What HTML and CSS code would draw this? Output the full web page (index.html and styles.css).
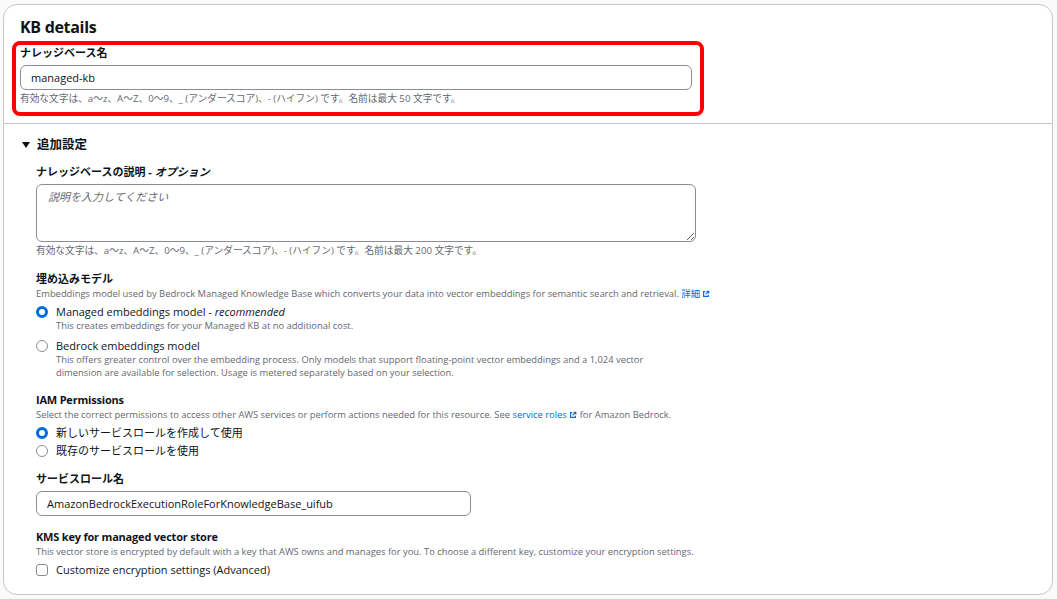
FILE: index.html
```html
<!doctype html>
<html lang="ja">
<head>
    <meta charset="utf-8">
    <meta name="viewport" content="width=device-width, initial-scale=1.0">
    <title>KB details</title>
    <link rel="stylesheet" href="styles.css">
</head>
<body>
    <div class="card">
        <h2 class="card-title">KB details</h2>
        <div class="name-field">
            <label class="field-label" for="kb-name">ナレッジベース名</label>
            <input class="text-input name-input" type="text" id="kb-name" value="managed-kb">
            <p class="hint">有効な文字は、a〜z、A〜Z、0〜9、_ (アンダースコア)、- (ハイフン) です。名前は最大 50 文字です。</p>
        </div>
        <div class="divider"></div>
        <div class="expander">
            <div class="expander-head"><span class="caret"></span>追加設定</div>
            <div class="expander-body">
                <div class="field">
                    <label class="field-label" for="kb-desc">ナレッジベースの説明 - <i>オプション</i></label>
                    <textarea class="text-area" id="kb-desc" placeholder="説明を入力してください"></textarea>
                    <p class="hint">有効な文字は、a〜z、A〜Z、0〜9、_ (アンダースコア)、- (ハイフン) です。名前は最大 200 文字です。</p>
                </div>

                <div class="field gap-lg">
                    <div class="field-label">埋め込みモデル</div>
                    <p class="desc">Embeddings model used by Bedrock Managed Knowledge Base which converts your data into vector embeddings for semantic search and retrieval. <a href="#" class="link">詳細 <svg class="ext" viewBox="0 0 10 10"><path d="M4 2H2v6h6V6" fill="none" stroke="currentColor" stroke-width="1.4"/><path d="M5.5 1.5h3v3M8.5 1.5L4.5 5.5" fill="none" stroke="currentColor" stroke-width="1.4"/></svg></a></p>
                    <div class="option first">
                        <span class="radio checked"></span>
                        <div>
                            <div class="option-label">Managed embeddings model - <i>recommended</i></div>
                            <div class="option-desc">This creates embeddings for your Managed KB at no additional cost.</div>
                        </div>
                    </div>
                    <div class="option spaced">
                        <span class="radio"></span>
                        <div>
                            <div class="option-label">Bedrock embeddings model</div>
                            <div class="option-desc">This offers greater control over the embedding process. Only models that support floating-point vector embeddings and a 1,024 vector<br>dimension are available for selection. Usage is metered separately based on your selection.</div>
                        </div>
                    </div>
                </div>

                <div class="field gap-lg">
                    <div class="field-label latin">IAM Permissions</div>
                    <p class="desc">Select the correct permissions to access other AWS services or perform actions needed for this resource. See <a href="#" class="link">service roles <svg class="ext" viewBox="0 0 10 10"><path d="M4 2H2v6h6V6" fill="none" stroke="currentColor" stroke-width="1.4"/><path d="M5.5 1.5h3v3M8.5 1.5L4.5 5.5" fill="none" stroke="currentColor" stroke-width="1.4"/></svg></a> for Amazon Bedrock.</p>
                    <div class="option first">
                        <span class="radio checked"></span>
                        <div class="option-label">新しいサービスロールを作成して使用</div>
                    </div>
                    <div class="option tight">
                        <span class="radio"></span>
                        <div class="option-label">既存のサービスロールを使用</div>
                    </div>
                </div>

                <div class="field gap-lg">
                    <label class="field-label" for="role-name">サービスロール名</label>
                    <input class="text-input role-input" type="text" id="role-name" value="AmazonBedrockExecutionRoleForKnowledgeBase_uifub">
                </div>

                <div class="field gap-lg">
                    <div class="field-label latin">KMS key for managed vector store</div>
                    <p class="desc">This vector store is encrypted by default with a key that AWS owns and manages for you. To choose a different key, customize your encryption settings.</p>
                    <div class="option first">
                        <span class="checkbox"></span>
                        <div class="option-label">Customize encryption settings (Advanced)</div>
                    </div>
                </div>
            </div>
        </div>
    </div>
</body>
</html>
```

FILE: styles.css
```css
body {
    margin: 0;
    padding: 0;
    background-color: #fafafa;
    font-family: "Open Sans", "Noto Sans CJK JP", sans-serif;
    color: #0f141a;
}
.card {
    margin: 4px 4px 0 3px;
    height: 591px;
    background-color: #fff;
    border: 1px solid #c6c6cd;
    border-radius: 14px;
    box-sizing: border-box;
    overflow: hidden;
}
.card-title {
    margin: 0;
    padding: 11px 16px 0;
    font-size: 16px;
    line-height: 22px;
    font-weight: 700;
    letter-spacing: -0.3px;
}
.name-field {
    margin: 3px 0 0 8px;
    width: 692px;
    padding: 1px 7px 6px 4px;
    border: 4px solid #ff0000;
    border-radius: 8px;
    box-sizing: border-box;
}
.field-label {
    display: block;
    font-size: 11px;
    line-height: 14px;
    font-weight: 700;
}
.field-label.latin {
    letter-spacing: -0.2px;
}
.field-label i {
    font-style: italic;
}
.text-input {
    display: block;
    box-sizing: border-box;
    height: 25px;
    margin-top: 5px;
    padding: 0 10px;
    border: 1px solid #8c8c94;
    border-radius: 6px;
    font-family: inherit;
    font-size: 11px;
    color: #0f141a;
    outline: none;
}
.name-input {
    width: 672px;
}
.role-input {
    width: 435px;
}
.hint {
    margin: 2px 0 0;
    font-size: 9.7px;
    line-height: 14px;
    color: #656871;
}
.divider {
    margin-top: 7px;
    border-top: 1px solid #c6c6cd;
}
.expander-head {
    display: flex;
    align-items: center;
    padding: 14px 0 0 18px;
    font-size: 12.5px;
    line-height: 14px;
    font-weight: 600;
}
.caret {
    width: 0;
    height: 0;
    margin-right: 7px;
    border-left: 4px solid transparent;
    border-right: 4px solid transparent;
    border-top: 6px solid #0f141a;
}
.expander-body {
    padding: 13px 0 0 32px;
}
.text-area {
    display: block;
    box-sizing: border-box;
    width: 660px;
    height: 58px;
    margin-top: 5px;
    padding: 3px 11px;
    border: 1px solid #8c8c94;
    border-radius: 6px;
    font-family: inherit;
    font-size: 11px;
    outline: none;
}
.text-area::placeholder {
    color: #656871;
    font-style: italic;
}
.gap-lg {
    margin-top: 14px;
}
.desc {
    margin: 1px 0 0;
    font-size: 9.4px;
    line-height: 13px;
    color: #656871;
}
.link {
    color: #006ce0;
    text-decoration: none;
}
.ext {
    width: 8px;
    height: 8px;
    vertical-align: -1px;
}
.option {
    display: flex;
    align-items: flex-start;
}
.option.first {
    margin-top: 5px;
}
.option.spaced {
    margin-top: 7px;
}
.option.tight {
    margin-top: 4px;
}
.option-label {
    font-size: 11px;
    line-height: 14px;
}
.option-desc {
    font-size: 9.4px;
    line-height: 13px;
    color: #656871;
}
.radio {
    flex: none;
    width: 12px;
    height: 12px;
    margin: 1px 8px 0 0;
    border: 1px solid #8c8c94;
    border-radius: 50%;
    box-sizing: border-box;
}
.radio.checked {
    border: 3.5px solid #006ce0;
}
.checkbox {
    flex: none;
    width: 12px;
    height: 12px;
    margin: 1px 8px 0 0;
    border: 1px solid #8c8c94;
    border-radius: 3px;
    box-sizing: border-box;
}
```
